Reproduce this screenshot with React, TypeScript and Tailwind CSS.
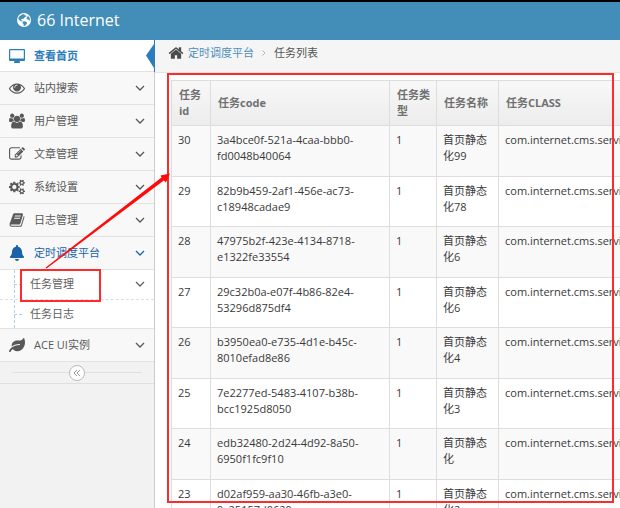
import type { ComponentType, ReactNode } from "react";
import { FaBell, FaLeaf } from "react-icons/fa";

type IconProps = { className?: string };

function GlobeIcon({ className }: IconProps) {
  return (
    <svg viewBox="0 0 14 14" fill="currentColor" className={className} aria-hidden="true">
      <path
        fillRule="evenodd"
        d="M7 0a7 7 0 1 1 0 14A7 7 0 0 1 7 0zM2.500 3.200 1.300 5l.6 1.800 1.700 1.100 1.500.5.500-.8-1.300-.3-.2-1.200 1.400-.4.8.6.6-1.400 1.300-1L9.500 3.500 8.300 2.200 7.200 2l.7-.8L5.500 1.300zM6 8.600l-.6 1.300 1.200 1.200.1 2 1.200-.4 1.700-1.700.6-1.600-2-.8-1-.4zM10.300 3.500l-.8 1.700.9 1.200 1.300.2.500 1.300.7-.9-.1-1.500-.9-2z"
      />
    </svg>
  );
}

function HomeIcon({ className }: IconProps) {
  return (
    <svg viewBox="0 0 1792 1792" fill="currentColor" className={className} aria-hidden="true">
      <path d="M1472 992v480q0 26-19 45t-45 19h-384v-384h-256v384h-384q-26 0-45-19t-19-45v-480q0-1 .5-3t.5-3l575-474 575 474q1 2 1 6zm223-69l-62 74q-8 9-21 11h-3q-13 0-21-7l-692-577-692 577q-12 8-24 7-13-2-21-11l-62-74q-8-10-7-23.5t11-21.5l719-599q32-26 76-26t76 26l244 204v-195q0-14 9-23t23-9h192q14 0 23 9t9 23v408l219 182q10 8 11 21.5t-7 23.5z" />
    </svg>
  );
}

function DesktopIcon({ className }: IconProps) {
  return (
    <svg viewBox="0 0 16 16" fill="currentColor" className={className} aria-hidden="true">
      <path
        fillRule="evenodd"
        d="M1 1h14a1 1 0 0 1 1 1v10a1 1 0 0 1-1 1h-4.500l.5 1.500v.5H5v-.5l.5-1.500H1a1 1 0 0 1-1-1V2a1 1 0 0 1 1-1zm.2 1.200v8.300h13.600V2.200z"
      />
    </svg>
  );
}

function EyeIcon({ className }: IconProps) {
  return (
    <svg viewBox="0 0 1792 1792" fill="currentColor" className={className} aria-hidden="true">
      <path d="M1664 960q-152-236-381-353 61 104 61 225 0 185-131.500 316.500t-316.500 131.500-316.500-131.500-131.500-316.500q0-121 61-225-229 117-381 353 133 205 333.500 326.500t434.500 121.500 434.500-121.500 333.500-326.500zm-720-384q0-20-14-34t-34-14q-125 0-214.500 89.500t-89.500 214.500q0 20 14 34t34 14 34-14 14-34q0-86 61-147t147-61q20 0 34-14t14-34zm848 384q0 34-20 69-140 230-376.500 368.500t-499.500 138.500-499.500-139-376.500-368q-20-35-20-69t20-69q140-229 376.500-368t499.500-139 499.500 139 376.500 368q20 35 20 69z" />
    </svg>
  );
}

function GroupIcon({ className }: IconProps) {
  return (
    <svg viewBox="0 0 1920 1792" fill="currentColor" className={className} aria-hidden="true">
      <path d="M593 896q-162 5-265 128h-134q-82 0-138-40.500t-56-118.500q0-353 124-353 6 0 43.500 21t97.500 42.500 119 21.500q67 0 133-23-5 37-5 66 0 139 81 256zm1071 637q0 120-73 189.500t-194 69.500h-874q-121 0-194-69.500t-73-189.500q0-53 3.500-103.500t14-109 26.500-108.500 43-97.500 62-81 85.500-53.500 111.500-20q10 0 43 21.500t73 48 107 48 135 21.500 135-21.500 107-48 73-48 43-21.500q61 0 111.500 20t85.500 53.500 62 81 43 97.500 26.500 108.500 14 109 3.500 103.500zm-1024-1277q0 106-75 181t-181 75-181-75-75-181 75-181 181-75 181 75 75 181zm704 384q0 159-112.500 271.500t-271.500 112.500-271.500-112.500-112.500-271.500 112.500-271.500 271.500-112.500 271.500 112.500 112.500 271.500zm576 225q0 78-56 118.500t-138 40.500h-134q-103-123-265-128 81-117 81-256 0-29-5-66 66 23 133 23 59 0 119-21.500t97.500-42.500 43.500-21q124 0 124 353zm-128-609q0 106-75 181t-181 75-181-75-75-181 75-181 181-75 181 75 75 181z" />
    </svg>
  );
}

function EditIcon({ className }: IconProps) {
  return (
    <svg viewBox="0 0 1792 1792" fill="currentColor" className={className} aria-hidden="true">
      <path d="M888 1184l116-116-152-152-116 116v56h96v96h56zm440-720q-16-16-33 1l-350 350q-17 17-1 33t33-1l350-350q17-17 1-33zm80 594v190q0 119-84.500 203.500t-203.500 84.500h-832q-119 0-203.500-84.500t-84.500-203.500v-832q0-119 84.500-203.500t203.500-84.500h832q63 0 117 25 15 7 18 23 3 17-9 29l-49 49q-14 14-32 8-23-6-45-6h-832q-66 0-113 47t-47 113v832q0 66 47 113t113 47h832q66 0 113-47t47-113v-126q0-13 9-22l64-64q15-15 35-7t20 29zm-96-738l288 288-672 672h-288v-288zm444 132l-92 92-288-288 92-92q28-28 68-28t68 28l152 152q28 28 28 68t-28 68z" />
    </svg>
  );
}

function CogsIcon({ className }: IconProps) {
  return (
    <svg viewBox="0 0 1920 1792" fill="currentColor" className={className} aria-hidden="true">
      <path d="M896 896q0-106-75-181t-181-75-181 75-75 181 75 181 181 75 181-75 75-181zm768 512q0-52-38-90t-90-38-90 38-38 90q0 53 37.500 90.500t90.500 37.500 90.500-37.500 37.500-90.500zm0-1024q0-52-38-90t-90-38-90 38-38 90q0 53 37.500 90.500t90.500 37.500 90.500-37.500 37.500-90.500zm-384 421v185q0 10-7 19.500t-16 10.500l-155 24q-11 35-32 76 34 48 90 115 7 11 7 20 0 12-7 19-23 30-82.500 89.500t-78.500 59.500q-11 0-21-7l-115-90q-37 19-77 31-11 108-23 155-7 24-30 24h-186q-11 0-20-7.500t-10-17.500l-23-153q-34-10-75-31l-118 89q-7 7-20 7-11 0-21-8-144-133-144-160 0-9 7-19 10-14 41-53t47-61q-23-44-35-82l-152-24q-10-1-17-9.500t-7-19.500v-185q0-10 7-19.500t16-10.500l155-24q11-35 32-76-34-48-90-115-7-11-7-20 0-12 7-20 22-30 82-89t79-59q11 0 21 7l115 90q34-18 77-32 11-108 23-154 7-24 30-24h186q11 0 20 7.500t10 17.500l23 153q34 10 75 31l118-89q8-7 20-7 11 0 21 8 144 133 144 160 0 8-7 19-12 16-42 54t-45 60q23 48 34 82l152 23q10 2 17 10.500t7 19.500zm640 533v140q0 16-149 31-12 27-30 52 51 113 51 138 0 4-4 7-122 71-124 71-8 0-46-47t-52-68q-20 2-30 2t-30-2q-14 21-52 68t-46 47q-2 0-124-71-4-3-4-7 0-25 51-138-18-25-30-52-149-15-149-31v-140q0-16 149-31 13-29 30-52-51-113-51-138 0-4 4-7 4-2 35-20t59-34 30-16q8 0 46 46.500t52 67.500q20-2 30-2t30 2q51-71 92-112l6-2q4 0 124 70 4 3 4 7 0 25-51 138 17 23 30 52 149 15 149 31zm0-1024v140q0 16-149 31-12 27-30 52 51 113 51 138 0 4-4 7-122 71-124 71-8 0-46-47t-52-68q-20 2-30 2t-30-2q-14 21-52 68t-46 47q-2 0-124-71-4-3-4-7 0-25 51-138-18-25-30-52-149-15-149-31v-140q0-16 149-31 13-29 30-52-51-113-51-138 0-4 4-7 4-2 35-20t59-34 30-16q8 0 46 46.500t52 67.500q20-2 30-2t30 2q51-71 92-112l6-2q4 0 124 70 4 3 4 7 0 25-51 138 17 23 30 52 149 15 149 31z" />
    </svg>
  );
}

function BookIcon({ className }: IconProps) {
  return (
    <svg viewBox="0 0 1792 1792" fill="currentColor" className={className} aria-hidden="true">
      <path d="M1703 478q40 57 18 129l-275 906q-19 64-76.500 107.500t-122.500 43.500h-923q-77 0-148.500-53.500t-99.500-131.500q-24-67-2-127 0-4 3-27t4-37q1-8-3-21.500t-3-19.500q2-11 8-21t16.500-23.500 16.500-23.500q23-38 45-91.500t30-91.500q3-10 .5-30t-.5-28q3-11 17-28t17-23q21-36 42-92t25-90q1-9-2.500-32t.5-28q4-13 22-30.500t22-22.500q19-26 42.500-84.500t27.500-96.500q1-8-3-25.500t-2-26.500q2-8 9-18t18-23 17-21q8-12 16.500-30.500t15-35 16-36 19.500-32 26.500-23.500 36-11.500 47.500 5.500l-1 3q38-9 51-9h761q74 0 114 56t18 130l-274 906q-36 119-71.500 153.500t-128.500 34.500h-869q-27 0-38 15-11 16-1 43 24 70 144 70h923q29 0 56-15.500t35-41.500l300-987q7-22 5-57 38 15 59 43zm-1064 2q-4 13 2 22.500t20 9.500h608q13 0 25.500-9.500t16.500-22.500l21-64q4-13-2-22.500t-20-9.500h-608q-13 0-25.500 9.500t-16.500 22.500zm-83 256q-4 13 2 22.500t20 9.500h608q13 0 25.500-9.500t16.500-22.500l21-64q4-13-2-22.500t-20-9.500h-608q-13 0-25.500 9.500t-16.500 22.500z" />
    </svg>
  );
}

function Chevron() {
  return (
    <svg viewBox="0 0 10 6" className="h-1.5 w-2.5 shrink-0" fill="none" stroke="currentColor" strokeWidth="1.3" aria-hidden="true">
      <path d="M1 1l4 4 4-4" />
    </svg>
  );
}

const menu: { label: string; icon: ComponentType<IconProps> }[] = [
  { label: "站内搜索", icon: EyeIcon },
  { label: "用户管理", icon: GroupIcon },
  { label: "文章管理", icon: EditIcon },
  { label: "系统设置", icon: CogsIcon },
  { label: "日志管理", icon: BookIcon },
];

const tasks = [
  { id: 30, code: "3a4bce0f-521a-4caa-bbb0-fd0048b40064", name: "首页静态化99" },
  { id: 29, code: "82b9b459-2af1-456e-ac73-c18948cadae9", name: "首页静态化78" },
  { id: 28, code: "47975b2f-423e-4134-8718-e1322fe33554", name: "首页静态化6" },
  { id: 27, code: "29c32b0a-e07f-4b86-82e4-53296d875df4", name: "首页静态化6" },
  { id: 26, code: "b3950ea0-e735-4d1e-b45c-8010efad8e86", name: "首页静态化4" },
  { id: 25, code: "7e2277ed-5483-4107-b38b-bcc1925d8050", name: "首页静态化3" },
  { id: 24, code: "edb32480-2d24-4d92-8a50-6950f1fc9f10", name: "首页静态化" },
  { id: 23, code: "d02af959-aa30-46fb-a3e0-9c25157d0629", name: "首页静态化2" },
];

function MenuItem({
  icon: Icon,
  label,
  active = false,
}: {
  icon: ComponentType<IconProps>;
  label: string;
  active?: boolean;
}) {
  return (
    <button
      type="button"
      className={`flex h-[33px] w-full items-center border-b border-[#e2e2e2] bg-[#f8f8f8] px-[9px] text-left ${
        active ? "text-[#1963aa]" : "text-[#585858]"
      }`}
    >
      <Icon className="size-4 shrink-0" />
      <span className="ml-[9px] flex-1">{label}</span>
      <Chevron />
    </button>
  );
}

function SubItem({ label, children }: { label: string; children?: ReactNode }) {
  return (
    <li className="h-[29px] border-t border-dashed border-[#dbdfe3] first:border-t-0">
      <a href="#" className="flex h-7 items-center pr-[9px] text-[#616161]">
        <span className="ml-3.5 w-2 border-t border-dashed border-[#b5cfe2]" />
        <span className="ml-2 flex-1">{label}</span>
        {children}
      </a>
    </li>
  );
}

function Sidebar() {
  return (
    <aside className="w-[155px] shrink-0 border-r border-[#ccc] bg-[#f2f2f2]">
      <nav>
        <a
          href="#"
          className="relative flex h-8 items-center border-b border-[#e2e2e2] bg-white pl-[9px] font-bold text-[#2b7dbc]"
        >
          <DesktopIcon className="size-4" />
          <span className="ml-[9px]">查看首页</span>
          <svg viewBox="0 0 10 32" className="absolute top-0 -right-px h-8 w-2.5" aria-hidden="true">
            <path d="M9 0h1v32H9V28L1 15.500 9 4z" fill="#2b7dbc" />
          </svg>
        </a>
        {menu.map((item) => (
          <MenuItem key={item.label} icon={item.icon} label={item.label} />
        ))}
        <MenuItem icon={FaBell} label="定时调度平台" active />
        <div className="relative border-b border-[#e2e2e2] bg-white">
          <span className="absolute inset-y-0 left-3.5 border-l border-dashed border-[#b5cfe2]" />
          <ul>
            <SubItem label="任务管理">
              <Chevron />
            </SubItem>
            <SubItem label="任务日志" />
          </ul>
        </div>
        <MenuItem icon={FaLeaf} label="ACE UI实例" />
      </nav>
      <div className="flex h-[22px] items-center border-b border-[#e0e0e0] px-3">
        <span className="flex-1 border-t border-[#e0e0e0]" />
        <button
          type="button"
          aria-label="Collapse sidebar"
          className="flex size-4 items-center justify-center rounded-full border border-[#bbb] bg-white text-[#999]"
        >
          <svg viewBox="0 0 8 8" className="size-2" fill="none" stroke="currentColor" aria-hidden="true">
            <path d="M4 1 1 4l3 3M7 1 4 4l3 3" />
          </svg>
        </button>
        <span className="flex-1 border-t border-[#e0e0e0]" />
      </div>
    </aside>
  );
}

function TaskTable() {
  return (
    <table className="w-full min-w-[520px] table-fixed border-collapse border border-[#ddd] text-left">
      <colgroup>
        <col className="w-[39px]" />
        <col className="w-[179px]" />
        <col className="w-[47px]" />
        <col className="w-[62px]" />
        <col />
      </colgroup>
      <thead>
        <tr className="h-[45px] bg-linear-to-b from-[#f8f8f8] to-[#ececec] text-[#707070]">
          <th className="border border-[#ddd] px-[7px] font-bold">任务id</th>
          <th className="border border-[#ddd] px-[7px] font-bold">任务code</th>
          <th className="border border-[#ddd] pr-1 pl-[7px] font-bold">任务类型</th>
          <th className="border border-[#ddd] px-[7px] font-bold">任务名称</th>
          <th className="border border-[#ddd] px-[7px] font-bold">任务CLASS</th>
        </tr>
      </thead>
      <tbody>
        {tasks.map((task) => (
          <tr key={task.id} className="align-top odd:h-[51px] odd:bg-[#f9f9f9] even:h-[50px]">
            <td className="border border-[#ddd] px-1.5 pt-1.5">{task.id}</td>
            <td className="border border-[#ddd] px-1.5 pt-1.5">{task.code}</td>
            <td className="border border-[#ddd] px-1.5 pt-1.5">1</td>
            <td className="border border-[#ddd] px-1.5 pt-1.5">{task.name}</td>
            <td className="border border-[#ddd] px-1.5 pt-1.5 whitespace-nowrap">com.internet.cms.service</td>
          </tr>
        ))}
      </tbody>
    </table>
  );
}

// Red boxes and arrow laid over the page to point out the task menu.
function Callout() {
  return (
    <svg className="pointer-events-none absolute inset-0 size-full" fill="none" stroke="#ff2a2a" strokeWidth="2" aria-hidden="true">
      <rect x="21" y="270" width="79" height="31" />
      <rect x="168" y="74" width="445" height="428" />
      <path d="M45.700 267.500 161.500 177.500 160.500 175.500 170 173.500 166 182.500 163.800 180.500 46.500 268.500z" fill="#ff0a0a" stroke="none" />
    </svg>
  );
}

export default function App() {
  return (
    <div className="relative flex h-screen flex-col overflow-hidden bg-white font-['Open_Sans','Noto_Sans_CJK_SC',sans-serif] text-[11px] leading-4 text-[#393939]">
      <header className="flex h-10 shrink-0 items-center border-t-2 border-black bg-[#438eb9] pb-0.5 pl-[17px] text-white">
        <GlobeIcon className="size-3.5" />
        <span className="ml-1.5 text-base">66 Internet</span>
      </header>
      <div className="flex min-h-0 flex-1">
        <Sidebar />
        <main className="min-w-0 flex-1 overflow-hidden">
          <div className="flex h-[33px] items-center border-b border-[#e5e5e5] bg-[#f5f5f5] pb-1.5 pl-[13px]">
            <HomeIcon className="size-4 text-[#4c4c4c]" />
            <a href="#" className="ml-1 text-[#4c8fbd]">
              定时调度平台
            </a>
            <svg viewBox="0 0 4 6" className="mx-2 h-1.5 w-1" fill="none" stroke="#b2b6bf" aria-hidden="true">
              <path d="M.5.5 3 3 .5 5.500" />
            </svg>
            <span className="text-[#555]">任务列表</span>
          </div>
          <div className="pt-[7px] pl-4">
            <TaskTable />
          </div>
        </main>
      </div>
      <Callout />
    </div>
  );
}
